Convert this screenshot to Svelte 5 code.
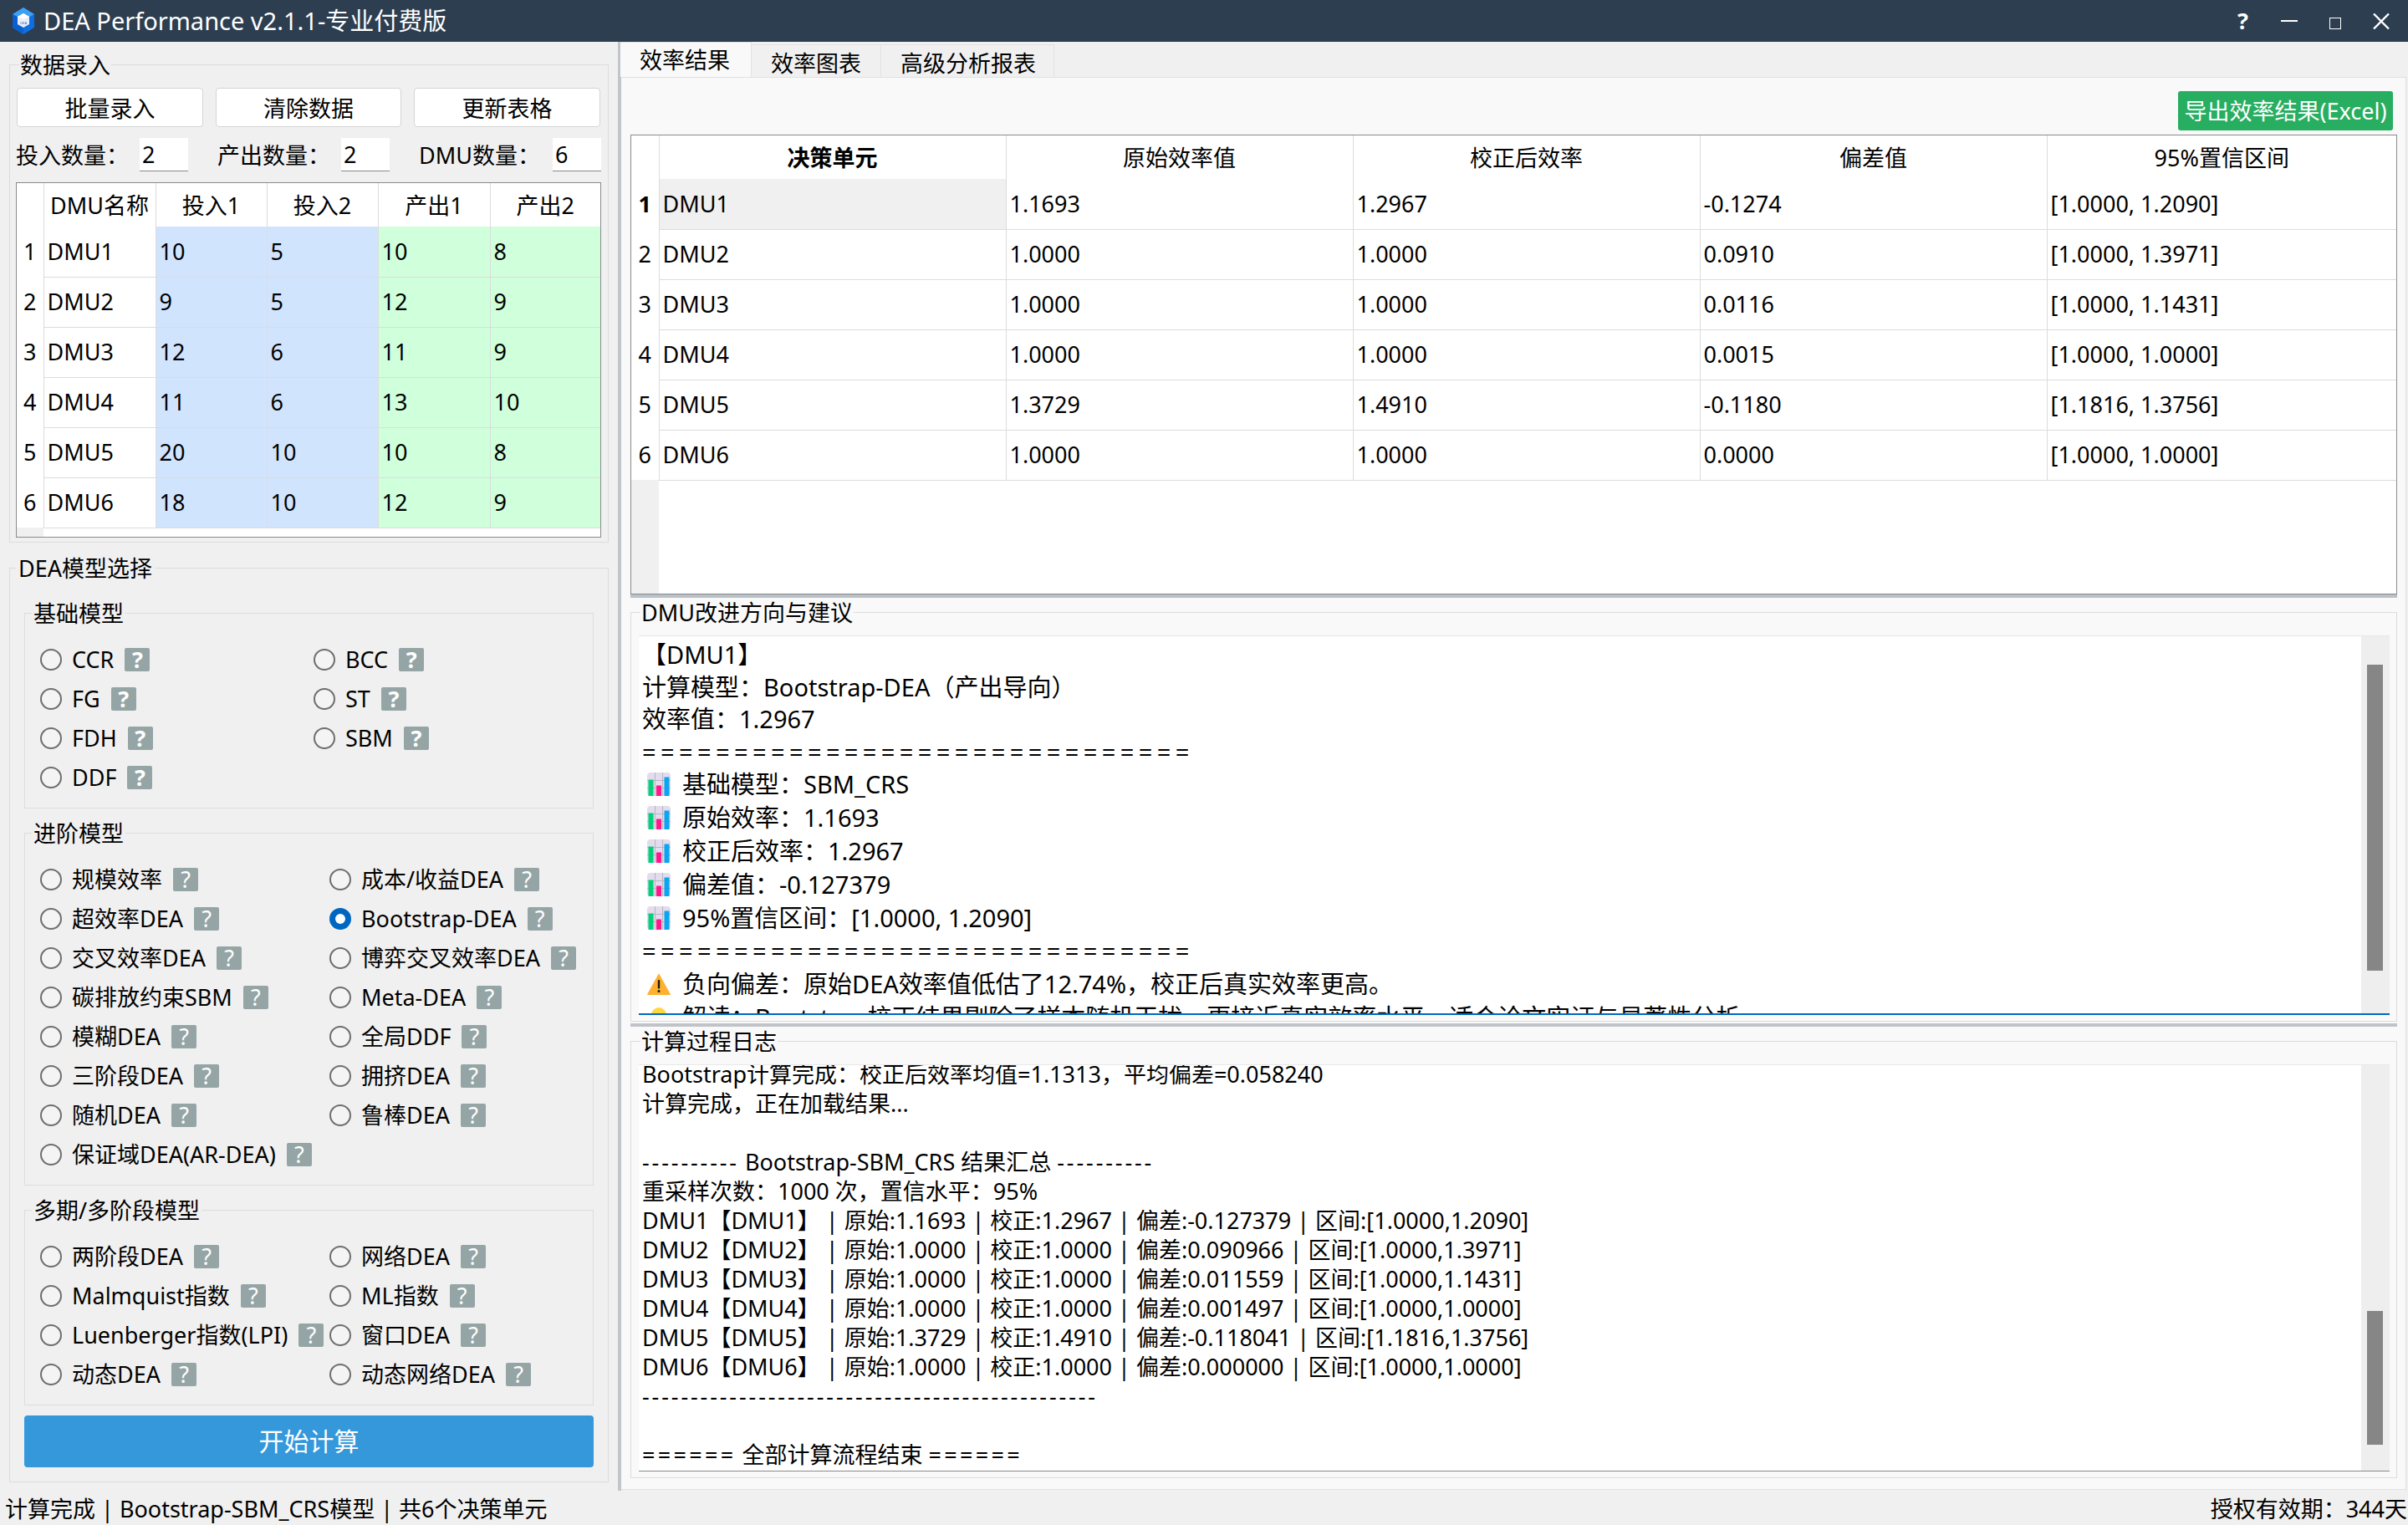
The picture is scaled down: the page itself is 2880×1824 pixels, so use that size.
<script>
  const dataButtons = ['批量录入', '清除数据', '更新表格'];
  const counts = [
    { label: '投入数量：', value: 2 },
    { label: '产出数量：', value: 2 },
    { label: 'DMU数量：', value: 6 }
  ];
  const inputRows = [
    ['DMU1', 10, 5, 10, 8],
    ['DMU2', 9, 5, 12, 9],
    ['DMU3', 12, 6, 11, 9],
    ['DMU4', 11, 6, 13, 10],
    ['DMU5', 20, 10, 10, 8],
    ['DMU6', 18, 10, 12, 9]
  ];

  const modelGroups = [
    {
      title: '基础模型',
      narrow: true,
      items: ['CCR', 'BCC', 'FG', 'ST', 'FDH', 'SBM', 'DDF']
    },
    {
      title: '进阶模型',
      items: [
        '规模效率', '成本/收益DEA', '超效率DEA', 'Bootstrap-DEA', '交叉效率DEA', '博弈交叉效率DEA',
        '碳排放约束SBM', 'Meta-DEA', '模糊DEA', '全局DDF', '三阶段DEA', '拥挤DEA',
        '随机DEA', '鲁棒DEA', '保证域DEA(AR-DEA)'
      ]
    },
    {
      title: '多期/多阶段模型',
      items: [
        '两阶段DEA', '网络DEA', 'Malmquist指数', 'ML指数',
        'Luenberger指数(LPI)', '窗口DEA', '动态DEA', '动态网络DEA'
      ]
    }
  ];

  const resultCols = ['原始效率值', '校正后效率', '偏差值', '95%置信区间'];
  const resultRows = [
    ['DMU1', '1.1693', '1.2967', '-0.1274', '[1.0000, 1.2090]'],
    ['DMU2', '1.0000', '1.0000', '0.0910', '[1.0000, 1.3971]'],
    ['DMU3', '1.0000', '1.0000', '0.0116', '[1.0000, 1.1431]'],
    ['DMU4', '1.0000', '1.0000', '0.0015', '[1.0000, 1.0000]'],
    ['DMU5', '1.3729', '1.4910', '-0.1180', '[1.1816, 1.3756]'],
    ['DMU6', '1.0000', '1.0000', '0.0000', '[1.0000, 1.0000]']
  ];

  const stats = [
    '基础模型：SBM_CRS',
    '原始效率：1.1693',
    '校正后效率：1.2967',
    '偏差值：-0.127379',
    '95%置信区间：[1.0000, 1.2090]'
  ];

  const summary = [
    'DMU1【DMU1】 | 原始:1.1693 | 校正:1.2967 | 偏差:-0.127379 | 区间:[1.0000,1.2090]',
    'DMU2【DMU2】 | 原始:1.0000 | 校正:1.0000 | 偏差:0.090966 | 区间:[1.0000,1.3971]',
    'DMU3【DMU3】 | 原始:1.0000 | 校正:1.0000 | 偏差:0.011559 | 区间:[1.0000,1.1431]',
    'DMU4【DMU4】 | 原始:1.0000 | 校正:1.0000 | 偏差:0.001497 | 区间:[1.0000,1.0000]',
    'DMU5【DMU5】 | 原始:1.3729 | 校正:1.4910 | 偏差:-0.118041 | 区间:[1.1816,1.3756]',
    'DMU6【DMU6】 | 原始:1.0000 | 校正:1.0000 | 偏差:0.000000 | 区间:[1.0000,1.0000]'
  ];
</script>

<div class="app">
  <!-- Title bar -->
  <header class="titlebar">
    <svg class="logo" viewBox="0 0 26 32" aria-hidden="true">
      <polygon points="13,0 26,8 26,24 13,32 0,24 0,8" fill="#0f6fe0" />
      <polygon points="13,0 26,8 13,15 0,8" fill="#3fa0f2" />
      <polygon points="0,8 13,15 13,32 0,24" fill="#0a5fd0" />
      <polygon points="13,7 20,11 20,20 13,24 6,20 6,11" fill="#e6eef9" />
      <polygon points="13,7 20,11 13,14 6,11" fill="#ffffff" />
      <text x="13" y="19.5" text-anchor="middle" font-size="4" fill="#3a6fc0" font-family="Liberation Sans, sans-serif">DEA</text>
    </svg>
    <span class="app-title">DEA Performance v2.1.1-专业付费版</span>
    <div class="win-btns">
      <span class="win-btn help">?</span>
      <span class="win-btn">
        <svg width="20" height="4" viewBox="0 0 20 4"><rect y="1" width="20" height="2" fill="#fff" /></svg>
      </span>
      <span class="win-btn">
        <svg class="max-ico" width="14" height="14" viewBox="0 0 14 14"><rect x="0.5" y="0.5" width="13" height="13" fill="none" stroke="#fff" /></svg>
      </span>
      <span class="win-btn">
        <svg class="close-ico" width="20" height="19" viewBox="0 0 20 19"><path d="M1 0.5 19 18.5M19 0.5 1 18.5" stroke="#fff" stroke-width="2.4" fill="none" /></svg>
      </span>
    </div>
  </header>

  <div class="main">
    <!-- Left column -->
    <aside class="left">
      <section class="group data-group">
        <span class="group-title">数据录入</span>
        <div class="data-btns">
          {#each dataButtons as b}
            <button class="plain-btn">{b}</button>
          {/each}
        </div>
        <div class="counts">
          {#each counts as c}
            <div class="count">
              <span>{c.label}</span>
              <span class="spin">{c.value}</span>
            </div>
          {/each}
        </div>
        <div class="input-table">
          <table>
            <colgroup>
              <col class="c-rh" /><col class="c-name" /><col class="c-a" /><col class="c-a" /><col class="c-name" /><col />
            </colgroup>
            <thead>
              <tr>
                <th></th><th>DMU名称</th><th>投入1</th><th>投入2</th><th>产出1</th><th>产出2</th>
              </tr>
            </thead>
            <tbody>
              {#each inputRows as row, i}
                <tr>
                  <td class="rh">{i + 1}</td>
                  <td class="cell">{row[0]}</td>
                  <td class="cell blue">{row[1]}</td>
                  <td class="cell blue">{row[2]}</td>
                  <td class="cell green">{row[3]}</td>
                  <td class="cell green">{row[4]}</td>
                </tr>
              {/each}
              <tr class="filler">
                <td class="rh-fill"></td><td colspan="5"></td>
              </tr>
            </tbody>
          </table>
        </div>
      </section>

      <section class="group model-group">
        <span class="group-title">DEA模型选择</span>
        {#each modelGroups as g}
          <div class="sub-group">
            <span class="sub-title">{g.title}</span>
            <div class="radio-grid" class:narrow={g.narrow}>
              {#each g.items as item}
                <div class="radio-row">
                  <span class="radio" class:checked={item === 'Bootstrap-DEA'}></span>
                  <span class="radio-label">{item}</span>
                  <span class="help-badge">?</span>
                </div>
              {/each}
            </div>
          </div>
        {/each}
        <button class="start-btn">开始计算</button>
      </section>
    </aside>

    <div class="vsplit"></div>

    <!-- Right column -->
    <div class="right">
      <nav class="tabs">
        <span class="tab active">效率结果</span>
        <span class="tab">效率图表</span>
        <span class="tab">高级分析报表</span>
      </nav>
      <div class="pane">
        <div class="toolbar">
          <button class="export-btn">导出效率结果(Excel)</button>
        </div>

        <div class="result-table">
          <table>
            <colgroup>
              <col class="r-rh" /><col class="r-c" /><col class="r-c" /><col class="r-c" /><col class="r-c" /><col />
            </colgroup>
            <thead>
              <tr>
                <th></th>
                <th class="strong">决策单元</th>
                {#each resultCols as c}
                  <th>{c}</th>
                {/each}
              </tr>
            </thead>
            <tbody>
              {#each resultRows as row, i}
                <tr>
                  <td class="rh" class:strong={i === 0}>{i + 1}</td>
                  {#each row as v, j}
                    <td class="cell" class:current={i === 0 && j === 0}>{v}</td>
                  {/each}
                </tr>
              {/each}
              <tr class="filler">
                <td class="rh-fill"></td><td colspan="5"></td>
              </tr>
            </tbody>
          </table>
        </div>
        <div class="hsplit"></div>

        <section class="group advice-group">
          <span class="group-title">DMU改进方向与建议</span>
          <div class="textbox focused">
            <div class="advice">
              <div class="ln">【DMU1】</div>
              <div class="ln">计算模型：Bootstrap-DEA（产出导向）</div>
              <div class="ln">效率值：1.2967</div>
              <div class="ln eq">==============================</div>
              {#each stats as s}
                <div class="ln icon-ln">
                  <svg class="emoji" viewBox="0 0 28 28" aria-hidden="true">
                    <rect width="28" height="28" rx="4" fill="#e2dcec" />
                    <path d="M0 9.5H28M0 18.5H28M9.5 0V28M18.5 0V28" stroke="#b9b3c4" stroke-width="1" />
                    <rect x="1.5" y="8.5" width="6" height="19.5" fill="#00d27a" />
                    <rect x="11" y="15.5" width="6" height="12.5" fill="#ff1a8c" />
                    <rect x="20.5" y="5.5" width="6" height="22.5" fill="#0aa6f0" />
                  </svg>
                  <span>{s}</span>
                </div>
              {/each}
              <div class="ln eq">==============================</div>
              <div class="ln icon-ln">
                <svg class="emoji" viewBox="0 0 28 28" aria-hidden="true">
                  <path d="M14 2 27.5 26.5H.5Z" fill="#ffb02e" stroke="#ffb02e" stroke-linejoin="round" stroke-width="1" />
                  <rect x="12.8" y="9" width="2.4" height="10.5" rx="1" fill="#1a1a1a" />
                  <circle cx="14" cy="22.5" r="1.5" fill="#1a1a1a" />
                </svg>
                <span>负向偏差：原始DEA效率值低估了12.74%，校正后真实效率更高。</span>
              </div>
              <div class="ln icon-ln">
                <svg class="emoji" viewBox="0 0 28 28" aria-hidden="true">
                  <circle cx="14" cy="11" r="9" fill="#ffd83d" />
                  <rect x="10" y="18" width="8" height="8" fill="#e8b93a" />
                </svg>
                <span>解读：Bootstrap校正结果剔除了样本随机干扰，更接近真实效率水平，适合论文实证与显著性分析。</span>
              </div>
            </div>
            <div class="vscroll"><div class="thumb thumb-a"></div></div>
          </div>
        </section>
        <div class="hsplit second"></div>

        <section class="group log-group">
          <span class="group-title">计算过程日志</span>
          <div class="textbox">
            <div class="log">
              <div>Bootstrap计算完成：校正后效率均值=1.1313，平均偏差=0.058240</div>
              <div>计算完成，正在加载结果...</div>
              <div>&nbsp;</div>
              <div><span class="dash">----------</span> Bootstrap-SBM_CRS 结果汇总 <span class="dash">----------</span></div>
              <div>重采样次数：1000 次，置信水平：95%</div>
              {#each summary as s}
                <div>{s}</div>
              {/each}
              <div><span class="dash">-----------------------------------------------</span></div>
              <div>&nbsp;</div>
              <div><span class="eq-s">======</span> 全部计算流程结束 <span class="eq-s">======</span></div>
            </div>
            <div class="vscroll"><div class="thumb thumb-b"></div></div>
          </div>
        </section>
      </div>
    </div>
  </div>

  <footer class="statusbar">
    <span>计算完成 | Bootstrap-SBM_CRS模型 | 共6个决策单元</span>
    <span>授权有效期：344天</span>
  </footer>
</div>

<style>
  :global(body) {
    margin: 0;
  }

  .app {
    width: 2880px;
    height: 1824px;
    display: flex;
    flex-direction: column;
    overflow: hidden;
    background: #f0f0f0;
    color: #000;
    font-family: "Noto Sans", "Noto Sans CJK SC", sans-serif;
    font-size: 27px;
    line-height: 36px;
  }

  button {
    font: inherit;
    margin: 0;
    cursor: pointer;
  }

  table {
    width: 100%;
    height: 100%;
    table-layout: fixed;
    border-collapse: collapse;
  }

  th {
    font-weight: 400;
    padding: 2px 0 0;
    text-align: center;
    border-left: 1px solid #dcdcdc;
  }

  th:first-child {
    border-left: 0;
  }

  td {
    padding: 0;
  }

  /* ── Title bar ───────────────────────────────────────────── */
  .titlebar {
    height: 50px;
    flex: none;
    display: flex;
    align-items: center;
    padding: 0 5px 0 15px;
    background: #2c3e50;
    color: #fff;
  }

  .logo {
    width: 26px;
    height: 32px;
    margin-right: 11px;
  }

  .app-title {
    flex: 1;
    font-size: 29px;
  }

  .win-btns {
    display: flex;
  }

  .win-btn {
    width: 55px;
    height: 50px;
    display: flex;
    align-items: center;
    justify-content: center;
  }

  .help {
    font-weight: 700;
  }

  .max-ico {
    margin-top: 6px;
  }

  .main {
    height: 1733px;
    flex: none;
    display: flex;
  }

  /* ── Group boxes ─────────────────────────────────────────── */
  .group {
    border: 1px solid #dcdcdc;
  }

  .group-title {
    display: block;
    width: fit-content;
    margin: -18px 0 0 4px;
    padding: 0 1px;
    background: #f0f0f0;
  }

  /* ── Left column ─────────────────────────────────────────── */
  .left {
    width: 739px;
    flex: none;
    box-sizing: border-box;
    padding: 27px 11px 0;
  }

  .data-group {
    height: 572px;
    box-sizing: border-box;
    padding: 0 8px 0 7px;
  }

  .data-btns {
    display: grid;
    grid-template-columns: 223px 222px 223px;
    gap: 15px;
    margin: 9px 1px 0;
  }

  .plain-btn {
    height: 47px;
    padding: 2px 0 0;
    background: #fff;
    border: 1px solid #d4d4d4;
    border-radius: 4px;
  }

  .counts {
    display: grid;
    grid-template-columns: 206px 206px 218px;
    gap: 35px;
    margin-top: 13px;
  }

  .count {
    display: flex;
    justify-content: space-between;
    align-items: center;
    height: 40px;
    padding-top: 1px;
    box-sizing: border-box;
  }

  .spin {
    width: 58px;
    height: 40px;
    box-sizing: border-box;
    margin-top: -1px;
    padding-left: 3px;
    background: #fff;
    border-bottom: 1px solid #8a8a8a;
    line-height: 40px;
  }

  .input-table {
    height: 425px;
    box-sizing: border-box;
    margin-top: 13px;
    border: 1px solid #8a8a8a;
    background: #fff;
  }

  .c-rh {
    width: 32px;
  }

  .c-name {
    width: 134px;
  }

  .c-a {
    width: 133px;
  }

  .input-table thead tr {
    height: 52px;
  }

  .input-table tbody tr {
    height: 60px;
  }

  .rh {
    text-align: center;
  }

  .cell {
    padding-left: 4px;
    border-left: 1px solid #dcdcdc;
    border-bottom: 1px solid #dcdcdc;
  }

  .blue {
    background: #d0e4fe;
  }

  .green {
    background: #d0ffdc;
  }

  .input-table .filler,
  .result-table .filler {
    height: auto;
  }

  .rh-fill {
    background: #f0f0f0;
  }

  .model-group {
    height: 1094px;
    box-sizing: border-box;
    margin-top: 30px;
    padding: 0 17px 0 17px;
  }

  .model-group .group-title {
    margin-left: -10px;
    padding: 0 3px;
  }

  .sub-group {
    border: 1px solid #dcdcdc;
    margin-bottom: 29px;
  }

  .sub-group:first-of-type {
    margin-top: 35px;
  }

  .sub-title {
    display: block;
    width: fit-content;
    margin: -18px 0 0 8px;
    padding: 0 2px;
    background: #f0f0f0;
  }

  .radio-grid {
    display: grid;
    grid-template-columns: 346px 1fr;
    grid-auto-rows: 47px;
    margin: 13px 0 13px 18px;
  }

  .radio-grid.narrow {
    grid-template-columns: 327px 1fr;
  }

  .radio-row {
    display: flex;
    align-items: center;
    white-space: nowrap;
  }

  .radio {
    width: 26px;
    height: 26px;
    flex: none;
    box-sizing: border-box;
    border: 2px solid #6e6e6e;
    border-radius: 50%;
    background: #f4f4f4;
    margin-right: 12px;
  }

  .radio.checked {
    border: 7px solid #0067c0;
    background: #fff;
  }

  .help-badge {
    width: 30px;
    height: 28px;
    flex: none;
    margin-left: 13px;
    border-radius: 2px;
    background: #95a5a6;
    color: #fff;
    font-size: 27px;
    line-height: 28px;
    text-align: center;
  }

  .narrow .help-badge {
    font-weight: 700;
  }

  .start-btn {
    display: block;
    width: 100%;
    height: 62px;
    margin-top: -17px;
    padding: 0;
    background: #3498db;
    color: #fff;
    border: 0;
    border-radius: 4px;
    font-size: 30px;
  }

  .vsplit {
    width: 4px;
    flex: none;
    background: #c2c6ca;
  }

  /* ── Right column ────────────────────────────────────────── */
  .right {
    width: 2135px;
    flex: none;
    display: flex;
    flex-direction: column;
  }

  .tabs {
    height: 42px;
    flex: none;
    display: flex;
    align-items: flex-end;
    margin-left: -1px;
  }

  .tab {
    height: 39px;
    box-sizing: border-box;
    padding: 0 0 0 23px;
    background: #f0f0f0;
    border: 1px solid #e2e2e2;
    border-width: 1px 1px 0 0;
    line-height: 44px;
    white-space: nowrap;
  }

  .tab.active {
    height: 42px;
    width: 157px;
    background: #f9f9f9;
    line-height: 42px;
  }

  .tab:last-child {
    width: 207px;
  }

  .tab:nth-child(2) {
    width: 155px;
  }

  .pane {
    height: 1690px;
    box-sizing: border-box;
    padding: 16px 10px 0 11px;
    background: #f9f9f9;
    border: 1px solid #e0e0e0;
    border-left: 0;
  }

  .pane .group-title {
    margin-left: 2px;
    background: #f9f9f9;
  }

  .toolbar {
    height: 47px;
    display: flex;
    justify-content: flex-end;
    margin-bottom: 5px;
  }

  .export-btn {
    width: 257px;
    margin-right: 5px;
    padding: 0;
    background: #27ae60;
    color: #fff;
    border: 0;
    border-radius: 3px;
    white-space: nowrap;
  }

  .result-table {
    height: 550px;
    box-sizing: border-box;
    border: 1px solid #8a8a8a;
    background: #fff;
  }

  .r-rh {
    width: 33px;
  }

  .r-c {
    width: 415px;
  }

  .result-table thead tr {
    height: 52px;
  }

  .result-table tbody tr {
    height: 60px;
  }

  .result-table .filler {
    height: 136px;
  }

  .strong {
    font-weight: 700;
  }

  .current {
    background: #f0f0f0;
  }

  .hsplit {
    height: 4px;
    background: #b8c0c8;
  }

  .hsplit.second {
    margin-top: 2px;
    background: #c0c4c8;
  }

  .advice-group {
    height: 490px;
    box-sizing: border-box;
    margin-top: 17px;
    padding: 0 8px 7px 9px;
    display: flex;
    flex-direction: column;
  }

  .log-group {
    height: 523px;
    box-sizing: border-box;
    margin-top: 17px;
    padding: 0 8px 7px 9px;
    display: flex;
    flex-direction: column;
  }

  .textbox {
    flex: 1;
    min-height: 0;
    margin-top: 9px;
    display: flex;
    background: #fff;
    border-top: 1px solid #e8e8e8;
    border-bottom: 1px solid #8a8a8a;
  }

  .textbox.focused {
    border-bottom: 2px solid #0067c0;
  }

  .advice,
  .log {
    flex: 1;
    min-width: 0;
    overflow: hidden;
  }

  .advice > div,
  .log > div {
    white-space: pre;
  }

  .advice {
    padding: 3px 0 0 4px;
    font-size: 29px;
  }

  .ln {
    height: 38.5px;
    line-height: 38.5px;
  }

  .icon-ln {
    height: 40px;
    line-height: 40px;
    display: flex;
    align-items: center;
  }

  .emoji {
    width: 28px;
    height: 28px;
    flex: none;
    margin: 0 14px 0 6px;
  }

  .eq {
    letter-spacing: 5.4px;
  }

  .log {
    padding-left: 4px;
    line-height: 35px;
  }

  .log > div:first-child {
    margin-top: -7px;
  }

  .dash {
    letter-spacing: 2.9px;
  }

  .eq-s {
    letter-spacing: 3.3px;
  }

  .vscroll {
    width: 34px;
    flex: none;
    background: #eee;
  }

  .thumb {
    width: 19px;
    margin-left: 7px;
    background: #868686;
  }

  .thumb-a {
    height: 366px;
    margin-top: 34px;
  }

  .thumb-b {
    height: 160px;
    margin-top: 294px;
  }

  /* ── Status bar ──────────────────────────────────────────── */
  .statusbar {
    height: 41px;
    flex: none;
    display: flex;
    justify-content: space-between;
    align-items: center;
    padding: 2px 1px 0 6px;
    box-sizing: border-box;
  }
</style>
